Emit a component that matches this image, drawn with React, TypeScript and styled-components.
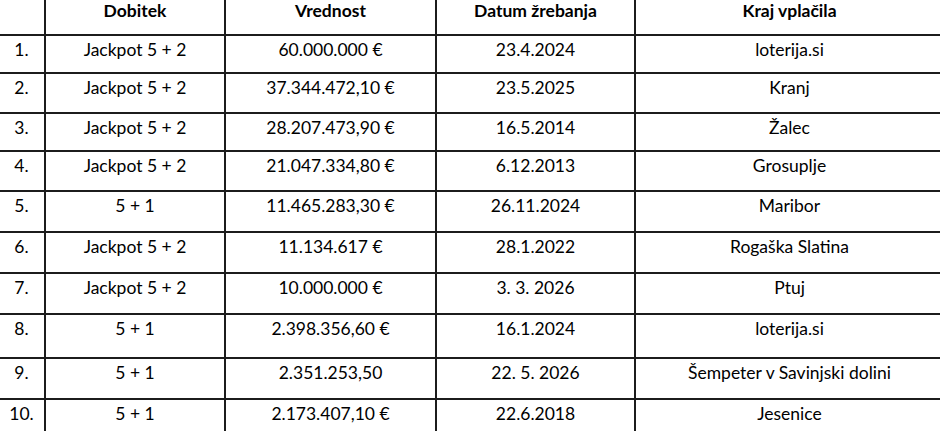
import React from "react";
import styled, { createGlobalStyle } from "styled-components";

const Global = createGlobalStyle`
  html, body { margin: 0; padding: 0; background: #ffffff; overflow: hidden; }
  body { font-family: Lato, "Open Sans", sans-serif; color: #000; }
`;

const Page = styled.div`
  width: 940px;
  height: 431px;
  overflow: hidden;
  background: #fff;
`;

const Table = styled.table`
  border-collapse: collapse;
  table-layout: fixed;
  width: 946px;
  margin: -5px 0 0 -3px;
  font-size: 17.5px;
`;

const HeadCell = styled.th`
  border: 2px solid #1c1c1c;
  font-weight: 700;
  text-align: center;
  vertical-align: top;
  padding: 4px 4px 0;
  line-height: 20px;
`;

const Cell = styled.td`
  border: 2px solid #1c1c1c;
  text-align: center;
  vertical-align: top;
  padding: 4px 4px 0;
  line-height: 20px;
  white-space: nowrap;
`;

const Row = styled.tr<{ $h: number }>`
  height: ${(p) => p.$h}px;
`;

const rows: [string, string, string, string, string, number][] = [
  ["1.", "Jackpot 5 + 2", "60.000.000 €", "23.4.2024", "loterija.si", 38],
  ["2.", "Jackpot 5 + 2", "37.344.472,10 €", "23.5.2025", "Kranj", 40],
  ["3.", "Jackpot 5 + 2", "28.207.473,90 €", "16.5.2014", "Žalec", 38],
  ["4.", "Jackpot 5 + 2", "21.047.334,80 €", "6.12.2013", "Grosuplje", 40],
  ["5.", "5 + 1", "11.465.283,30 €", "26.11.2024", "Maribor", 41],
  ["6.", "Jackpot 5 + 2", "11.134.617 €", "28.1.2022", "Rogaška Slatina", 41],
  ["7.", "Jackpot 5 + 2", "10.000.000 €", "3. 3. 2026", "Ptuj", 41],
  ["8.", "5 + 1", "2.398.356,60 €", "16.1.2024", "loterija.si", 44],
  ["9.", "5 + 1", "2.351.253,50", "22. 5. 2026", "Šempeter v Savinjski dolini", 41],
  ["10.", "5 + 1", "2.173.407,10 €", "22.6.2018", "Jesenice", 40],
];

export default function App() {
  return (
    <Page>
      <Global />
      <Table>
        <colgroup>
          <col style={{ width: 47 }} />
          <col style={{ width: 180 }} />
          <col style={{ width: 211 }} />
          <col style={{ width: 199 }} />
          <col style={{ width: 309 }} />
        </colgroup>
        <thead>
          <Row $h={39}>
            <HeadCell></HeadCell>
            <HeadCell>Dobitek</HeadCell>
            <HeadCell>Vrednost</HeadCell>
            <HeadCell>Datum žrebanja</HeadCell>
            <HeadCell>Kraj vplačila</HeadCell>
          </Row>
        </thead>
        <tbody>
          {rows.map((r) => (
            <Row key={r[0]} $h={r[5]}>
              <Cell>{r[0]}</Cell>
              <Cell>{r[1]}</Cell>
              <Cell>{r[2]}</Cell>
              <Cell>{r[3]}</Cell>
              <Cell>{r[4]}</Cell>
            </Row>
          ))}
        </tbody>
      </Table>
    </Page>
  );
}
